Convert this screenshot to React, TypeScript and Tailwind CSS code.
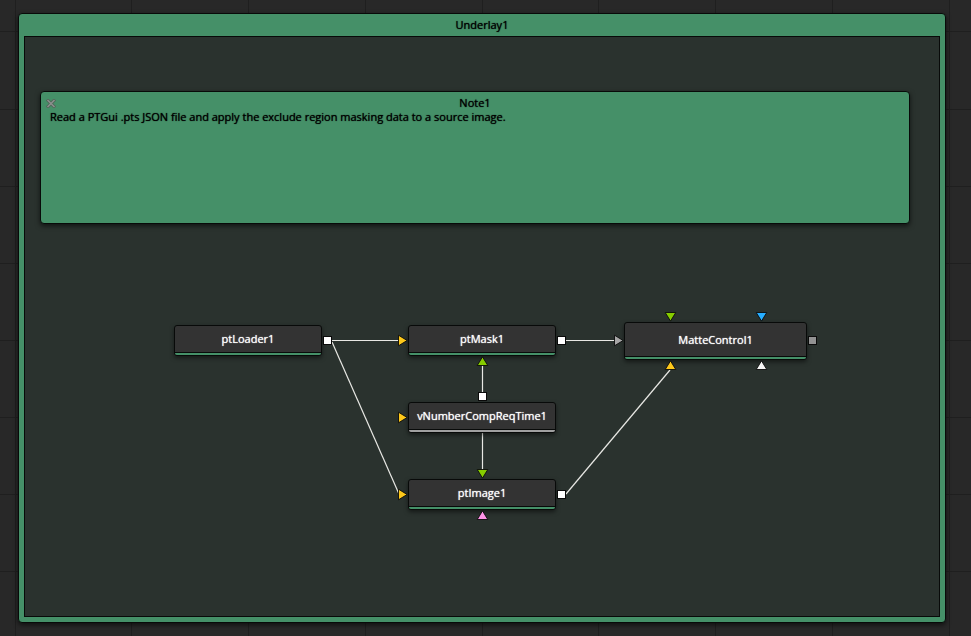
import React from "react";

type Direction = "right" | "up" | "down";
type Mark = { x: number; y: number; color: string };
type Inlet = Mark & { dir: Direction };
type FlowNode = {
  name: string;
  x: number;
  y: number;
  size: string;
  bar: string;
};

// Coordinates are measured from the top left of the underlay's inner area.
const nodes: FlowNode[] = [
  { name: "ptLoader1", x: 149, y: 288, size: "w-[148px] h-[31px]", bar: "bg-[#459068]" },
  { name: "ptMask1", x: 383, y: 288, size: "w-[148px] h-[31px]", bar: "bg-[#459068]" },
  { name: "MatteControl1", x: 599, y: 285, size: "w-[183px] h-[38px]", bar: "bg-[#459068]" },
  { name: "vNumberCompReqTime1", x: 383, y: 365, size: "w-[148px] h-[31px]", bar: "bg-[#a0a0a0]" },
  { name: "ptImage1", x: 383, y: 442, size: "w-[148px] h-[31px]", bar: "bg-[#459068]" },
];

const wires: [number, number, number, number][] = [
  [307, 303.5, 374, 303.5],
  [307, 305, 374, 457],
  [541, 303.5, 590, 303.5],
  [457.5, 356, 457.5, 328],
  [457.5, 396, 457.5, 433],
  [541, 457, 645, 333],
];

const outlets: Mark[] = [
  { x: 302.5, y: 303.5, color: "#ffffff" },
  { x: 536.5, y: 303.5, color: "#ffffff" },
  { x: 457.5, y: 359.5, color: "#ffffff" },
  { x: 536.5, y: 457.5, color: "#ffffff" },
  { x: 787.5, y: 303.5, color: "#929292" },
];

const inlets: Inlet[] = [
  { x: 377.5, y: 303.5, dir: "right", color: "#fdc81b" },
  { x: 377.5, y: 380.5, dir: "right", color: "#fdc81b" },
  { x: 377.5, y: 457.5, dir: "right", color: "#fdc81b" },
  { x: 593.5, y: 303.5, dir: "right", color: "#a6a6a6" },
  { x: 457.5, y: 324.5, dir: "up", color: "#86cc00" },
  { x: 457.5, y: 436.5, dir: "down", color: "#86cc00" },
  { x: 457.5, y: 478.5, dir: "up", color: "#ff94e8" },
  { x: 645.5, y: 279.5, dir: "down", color: "#86cc00" },
  { x: 736.5, y: 279.5, dir: "down", color: "#27aeff" },
  { x: 645.5, y: 328.5, dir: "up", color: "#fdc81b" },
  { x: 736.5, y: 328.5, dir: "up", color: "#f4f4f4" },
];

const arrow: Record<Direction, string> = {
  right: "-4,-5.3 4.6,0 -4,5.3",
  up: "-5.3,4 0,-4.6 5.3,4",
  down: "-5.3,-4 0,4.6 5.3,-4",
};

const columns = Array.from({ length: 24 }, (_, i) => Math.floor(15 + i * 116.75));
const rows = Array.from({ length: 24 }, (_, i) => Math.round(31.4 + i * 77.1));

function Grid() {
  return (
    <svg className="absolute inset-0 h-full w-full" aria-hidden="true">
      {columns.map((x) => (
        <rect key={x} x={x} y="0" width="1" height="100%" fill="#1f1f1f" />
      ))}
      {rows.map((y) => (
        <rect key={y} x="0" y={y} width="100%" height="1" fill="#1f1f1f" />
      ))}
    </svg>
  );
}

function Wires() {
  return (
    <svg className="absolute inset-0 h-full w-full" aria-hidden="true">
      {wires.map(([x1, y1, x2, y2], i) => (
        <line key={i} x1={x1} y1={y1} x2={x2} y2={y2} stroke="#e8e8e4" strokeWidth="1.2" />
      ))}
    </svg>
  );
}

function Ports() {
  return (
    <svg className="pointer-events-none absolute inset-0 h-full w-full" aria-hidden="true">
      {outlets.map((o, i) => (
        <rect key={i} x={o.x - 4} y={o.y - 4} width="8" height="8" fill={o.color} stroke="#0a0a0a" />
      ))}
      {inlets.map((p, i) => (
        <polygon
          key={i}
          points={arrow[p.dir]}
          transform={`translate(${p.x} ${p.y})`}
          fill={p.color}
          stroke="#0a0a0a"
          strokeWidth="0.9"
        />
      ))}
    </svg>
  );
}

function NodeTile({ node }: { node: FlowNode }) {
  return (
    <button
      type="button"
      className={`absolute flex flex-col overflow-hidden rounded-[3px] border border-[#080a09] bg-[#333333] shadow-[0_2px_4px_rgba(0,0,0,0.5)] ${node.size}`}
      style={{ left: node.x, top: node.y }}
    >
      <span className="flex w-full flex-1 items-center justify-center border-b border-[#080a09] text-white [text-shadow:0_0_1px_currentColor]">
        {node.name}
      </span>
      <span className={`h-0.5 w-full ${node.bar}`} />
    </button>
  );
}

export default function App() {
  return (
    <main className="relative flex min-h-screen bg-[#282828] pt-[13px] pr-[25px] pb-[13px] pl-[18px] font-['Open_Sans',sans-serif] text-[11px] leading-[14px]">
      <Grid />
      <section className="relative flex flex-1 flex-col rounded-[4px] border border-[#080a09] bg-[#459068] px-[5px] pb-[5px] text-black shadow-[0_2px_5px_rgba(0,0,0,0.6)]">
        <h1 className="py-1 text-center [text-shadow:0_0_1px_currentColor]">Underlay1</h1>
        <div className="relative flex-1 border border-[#080a09] bg-[#2a322e] pt-[54px] pr-[29px] pl-[15px]">
          <article className="relative h-[133px] rounded-[4px] border border-[#080a09] bg-[#459068] px-[9px] pt-1 shadow-[0_2px_5px_rgba(0,0,0,0.6)] [text-shadow:0_0_1px_currentColor]">
            <button type="button" aria-label="Close note" className="absolute top-[7px] left-[5px]">
              <svg className="block" width="10" height="9" viewBox="0 0 10 9" aria-hidden="true">
                <path d="M1 0.500L9 8.500M9 0.500L1 8.500" stroke="#4f6658" strokeWidth="3.200" />
                <path d="M1.500 1L8.500 8M8.500 1L1.500 8" stroke="#8b918e" strokeWidth="1.500" />
              </svg>
            </button>
            <h2 className="text-center">Note1</h2>
            <p>Read a PTGui .pts JSON file and apply the exclude region masking data to a source image.</p>
          </article>
          <Wires />
          {nodes.map((n) => (
            <NodeTile key={n.name} node={n} />
          ))}
          <Ports />
        </div>
      </section>
    </main>
  );
}
